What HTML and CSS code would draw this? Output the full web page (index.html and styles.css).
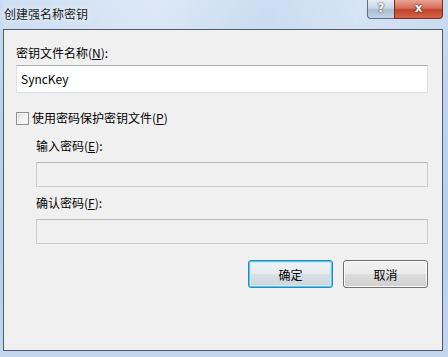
FILE: index.html
```html
<!DOCTYPE html>
<html lang="zh-CN">
<head>
    <meta charset="UTF-8">
    <title>创建强名称密钥</title>
    <link rel="stylesheet" href="styles.css">
</head>
<body>
    <div class="window">
        <div class="titlebar">
            <span class="title">创建强名称密钥</span>
            <div class="caption-buttons">
                <span class="cap-btn help">?</span>
                <span class="cap-btn close">x</span>
            </div>
        </div>
        <div class="client">
            <label class="label">密钥文件名称(<u>N</u>):</label>
            <div class="textbox">SyncKey</div>

            <div class="check-row">
                <span class="checkbox"></span>
                <span>使用密码保护密钥文件(<u>P</u>)</span>
            </div>

            <div class="indent">
                <label class="label gap">输入密码(<u>E</u>):</label>
                <div class="textbox disabled"></div>
                <label class="label small-gap">确认密码(<u>F</u>):</label>
                <div class="textbox disabled"></div>
            </div>

            <div class="buttons">
                <button class="btn default">确定</button>
                <button class="btn">取消</button>
            </div>
        </div>
    </div>
</body>
</html>
```

FILE: styles.css
```css
/* Page */
body {
    margin: 0;
    padding: 0;
    font-family: "Noto Sans CJK SC", "Noto Sans", sans-serif;
    font-size: 12px;
    color: #000;
}

/* Window frame (Aero glass look) */
.window {
    width: 448px;
    height: 357px;
    box-sizing: border-box;
    padding: 0 5px 6px 3px;
    display: flex;
    flex-direction: column;
    background: linear-gradient(to bottom, #cadcf1 0%, #bcd3ec 30%, #b6cfea 70%, #c2d7ee 100%);
}

.titlebar {
    height: 29px;
    display: flex;
    justify-content: space-between;
    align-items: flex-start;
    background: linear-gradient(100deg, rgba(255,255,255,0.1) 0%, rgba(255,255,255,0.35) 35%, rgba(255,255,255,0.05) 60%, rgba(255,255,255,0.25) 80%, rgba(255,255,255,0.05) 100%);
}

.title {
    margin: 6px 0 0 1px;
    line-height: 16px;
    color: #1b1b1b;
    text-shadow: 0 0 6px rgba(255, 255, 255, 0.9);
}

.caption-buttons {
    display: flex;
}

.cap-btn {
    height: 18px;
    line-height: 17px;
    text-align: center;
    color: #fff;
    font-family: "DejaVu Sans", sans-serif;
    font-weight: bold;
    border: 1px solid #5d6f84;
    border-top: none;
}

.cap-btn.help {
    width: 26px;
    font-size: 12px;
    border-radius: 0 0 0 4px;
    border-right: none;
    background: linear-gradient(to bottom, #e5ecf3 0%, #c9d6e3 45%, #a9bccf 55%, #c4d3e2 100%);
    text-shadow: 0 0 2px #3b4b5c, 0 0 1px #3b4b5c;
}

.cap-btn.close {
    width: 47px;
    font-size: 12px;
    border-radius: 0 0 4px 0;
    border-color: #7d2a1c;
    background: linear-gradient(to bottom, #e8a493 0%, #d6705a 45%, #c2432a 55%, #d0664c 100%);
    text-shadow: 0 0 2px #4a1208, 0 0 1px #4a1208;
}

/* Client area */
.client {
    flex: 1;
    display: flex;
    flex-direction: column;
    padding: 15px 14px 0 12px;
    background-color: #f0f0f0;
    border: 1px solid #4d5d6e;
}

.label {
    display: block;
    line-height: 16px;
}

.textbox {
    margin-top: 4px;
    height: 28px;
    box-sizing: border-box;
    padding: 0 4px;
    line-height: 26px;
    background-color: #fff;
    border: 1px solid #dbdfe6;
    border-top-color: #abadb3;
    border-left-color: #e2e3ea;
    border-radius: 1px;
}

.textbox.disabled {
    margin-top: 8px;
    height: 25px;
    background-color: #f0f0f0;
    border-color: #c9cbcf;
    border-top-color: #b6b8bc;
}

.check-row {
    margin-top: 17px;
    display: flex;
    align-items: center;
    gap: 3px;
    line-height: 16px;
}

.checkbox {
    width: 11px;
    height: 11px;
    border: 1px solid #8e8f8f;
    background: linear-gradient(135deg, #dcdcdc 0%, #f4f4f4 60%, #fdfdfd 100%);
    box-shadow: inset 0 0 0 1px #f4f4f4;
}

.indent {
    padding-left: 20px;
}

.label.gap {
    margin-top: 12px;
}

.label.small-gap {
    margin-top: 8px;
}

/* Dialog buttons */
.buttons {
    margin-top: 16px;
    display: flex;
    justify-content: flex-end;
    gap: 10px;
}

.btn {
    width: 85px;
    height: 28px;
    font-family: "Noto Sans CJK SC", sans-serif;
    font-size: 12px;
    color: #000;
    border: 1px solid #707070;
    border-radius: 3px;
    padding: 0;
    background: linear-gradient(to bottom, #f2f2f2 0%, #ebebeb 48%, #dddddd 52%, #cfcfcf 100%);
    box-shadow: inset 0 0 0 1px #fbfbfb;
}

.btn.default {
    border-color: #3c7fb1;
    background: linear-gradient(to bottom, #f1f4f6 0%, #e6ebef 48%, #d8e0e6 52%, #ccd6de 100%);
    box-shadow: inset 0 0 0 1px #48d0f2, inset 0 0 0 2px #c6ecf8;
}
```
